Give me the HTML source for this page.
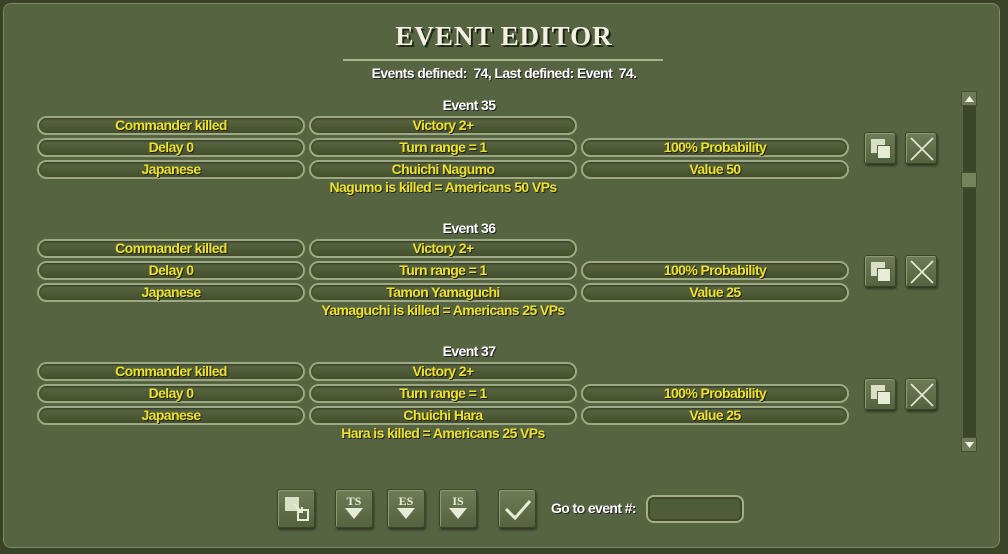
<!DOCTYPE html><html><head><style>
body{margin:0;width:1008px;height:554px;overflow:hidden;background:#3a4228;font-family:"Liberation Sans Narrow","Liberation Sans",sans-serif;}
#p{position:absolute;left:3px;top:3px;width:997px;height:545px;background:#566442;border-radius:8px;border:1px solid #7d8a63;box-sizing:border-box}
.a{position:absolute}
.t{position:absolute;left:0;width:1008px;text-align:center}
.pill{position:absolute;height:19px;width:268px;box-sizing:border-box;border:2px solid #9ea983;border-radius:10px;background:linear-gradient(#5a6743,#44502d);box-shadow:inset 0 1px 2px #2c3420;color:#ece22c;font-weight:bold;font-size:14px;line-height:15px;text-align:center;text-shadow:1px 1px 0 #222;letter-spacing:-0.6px}
.lbl{position:absolute;left:0;width:938px;text-align:center;color:#fff;font-weight:bold;font-size:14px;text-shadow:1px 1px 0 #222;letter-spacing:-0.6px}
.desc{position:absolute;left:0;width:886px;text-align:center;color:#ece22c;font-weight:bold;font-size:14px;text-shadow:1px 1px 0 #222;letter-spacing:-0.6px}
.btn{position:absolute;width:32px;height:32px;box-sizing:border-box;background:linear-gradient(#6f7c57,#55623f);border:1px solid #3c4529;box-shadow:1px 2px 2px #2f371f, inset 1px 1px 0 #8e9a73;border-radius:3px}
.bb{position:absolute;width:38px;height:39px;top:489px;box-sizing:border-box;background:linear-gradient(#6f7c57,#55623f);border:1px solid #3c4529;box-shadow:1px 2px 2px #2f371f, inset 1px 1px 0 #8e9a73;border-radius:3px;color:#e8eed8;font-family:"Liberation Serif",serif;font-weight:bold;font-size:12px;text-align:center}
.c1{position:absolute;left:6px;top:6px;width:14px;height:14px;background:#d8dfc4}
.c2{position:absolute;left:12px;top:12px;width:14px;height:14px;background:#e6ecd6;border:1px solid #55623f;box-sizing:border-box}
</style></head><body>
<div id="p"></div>
<div class="t" style="top:21px;font-family:'Liberation Serif',serif;font-weight:bold;font-size:27px;color:#f2f0e0;text-shadow:2px 2px 0 #1e2414;letter-spacing:1px">EVENT EDITOR</div>
<div class="a" style="left:343px;top:59px;width:320px;height:2px;background:#a9b38e"></div>
<div class="t" style="top:65px;color:#fff;font-weight:bold;font-size:14px;text-shadow:1px 1px 0 #222;letter-spacing:-0.6px">Events defined:&nbsp; 74, Last defined: Event&nbsp; 74.</div>

<div class="lbl" style="top:97px">Event 35</div>
<div class="pill" style="left:37px;top:116px">Commander killed</div>
<div class="pill" style="left:309px;top:116px">Victory 2+</div>
<div class="pill" style="left:37px;top:138px">Delay 0</div>
<div class="pill" style="left:309px;top:138px">Turn range = 1</div>
<div class="pill" style="left:581px;top:138px">100% Probability</div>
<div class="pill" style="left:37px;top:160px">Japanese</div>
<div class="pill" style="left:309px;top:160px">Chuichi Nagumo</div>
<div class="pill" style="left:581px;top:160px">Value 50</div>
<div class="desc" style="top:179px">Nagumo is killed = Americans 50 VPs</div>

<div class="lbl" style="top:220px">Event 36</div>
<div class="pill" style="left:37px;top:239px">Commander killed</div>
<div class="pill" style="left:309px;top:239px">Victory 2+</div>
<div class="pill" style="left:37px;top:261px">Delay 0</div>
<div class="pill" style="left:309px;top:261px">Turn range = 1</div>
<div class="pill" style="left:581px;top:261px">100% Probability</div>
<div class="pill" style="left:37px;top:283px">Japanese</div>
<div class="pill" style="left:309px;top:283px">Tamon Yamaguchi</div>
<div class="pill" style="left:581px;top:283px">Value 25</div>
<div class="desc" style="top:302px">Yamaguchi is killed = Americans 25 VPs</div>

<div class="lbl" style="top:343px">Event 37</div>
<div class="pill" style="left:37px;top:362px">Commander killed</div>
<div class="pill" style="left:309px;top:362px">Victory 2+</div>
<div class="pill" style="left:37px;top:384px">Delay 0</div>
<div class="pill" style="left:309px;top:384px">Turn range = 1</div>
<div class="pill" style="left:581px;top:384px">100% Probability</div>
<div class="pill" style="left:37px;top:406px">Japanese</div>
<div class="pill" style="left:309px;top:406px">Chuichi Hara</div>
<div class="pill" style="left:581px;top:406px">Value 25</div>
<div class="desc" style="top:425px">Hara is killed = Americans 25 VPs</div>

<div class="btn" style="left:864px;top:132px"><div class="c1"></div><div class="c2"></div></div>
<div class="btn" style="left:905px;top:132px"><svg class="a" style="left:0;top:0" width="32" height="32"><path d="M5 5L27 27M27 5L5 27" stroke="#e6ecd6" stroke-width="1.6"/></svg></div>
<div class="btn" style="left:864px;top:255px"><div class="c1"></div><div class="c2"></div></div>
<div class="btn" style="left:905px;top:255px"><svg class="a" style="left:0;top:0" width="32" height="32"><path d="M5 5L27 27M27 5L5 27" stroke="#e6ecd6" stroke-width="1.6"/></svg></div>
<div class="btn" style="left:864px;top:378px"><div class="c1"></div><div class="c2"></div></div>
<div class="btn" style="left:905px;top:378px"><svg class="a" style="left:0;top:0" width="32" height="32"><path d="M5 5L27 27M27 5L5 27" stroke="#e6ecd6" stroke-width="1.6"/></svg></div>

<div class="a" style="left:963px;top:92px;width:13px;height:360px;background:#3c4629"></div>
<div class="a" style="left:961px;top:91px;width:16px;height:15px;background:#6f7c57;border:1px solid #44502f;box-sizing:border-box"><svg class="a" style="left:2px;top:3px" width="11" height="8"><path d="M5.5 1L10 7H1Z" fill="#eef2e0"/></svg></div>
<div class="a" style="left:961px;top:172px;width:16px;height:16px;background:#76835c;border:1px solid #44502f;box-sizing:border-box"></div>
<div class="a" style="left:961px;top:437px;width:16px;height:15px;background:#6f7c57;border:1px solid #44502f;box-sizing:border-box"><svg class="a" style="left:2px;top:3px" width="11" height="8"><path d="M1 1H10L5.5 7Z" fill="#eef2e0"/></svg></div>

<div class="bb" style="left:277px"><div class="a" style="left:7px;top:7px;width:14px;height:14px;background:#d8dfc4"></div><svg class="a" style="left:0;top:0" width="38" height="39"><path d="M20 20h10v10h-10z" fill="none" stroke="#e6ecd6" stroke-width="2"/><path d="M16 14l8 8M24 17v5h-5" stroke="#e6ecd6" stroke-width="2" fill="none"/></svg></div>
<div class="bb" style="left:335px"><div style="margin-top:5px;line-height:12px">TS</div><svg width="20" height="13"><path d="M1 1H19L10 12Z" fill="#e6ecd6"/></svg></div>
<div class="bb" style="left:387px"><div style="margin-top:5px;line-height:12px">ES</div><svg width="20" height="13"><path d="M1 1H19L10 12Z" fill="#e6ecd6"/></svg></div>
<div class="bb" style="left:439px"><div style="margin-top:5px;line-height:12px">IS</div><svg width="20" height="13"><path d="M1 1H19L10 12Z" fill="#e6ecd6"/></svg></div>
<div class="bb" style="left:498px"><svg class="a" style="left:0;top:0" width="38" height="39"><path d="M7 19L16 28L31 11" stroke="#e6ecd6" stroke-width="3" fill="none"/></svg></div>
<div class="a" style="left:551px;top:500px;color:#fff;font-weight:bold;font-size:14px;text-shadow:1px 1px 0 #222;letter-spacing:-0.6px">Go to event #:</div>
<div class="a" style="left:646px;top:495px;width:98px;height:28px;box-sizing:border-box;border:2px solid #a4ae88;border-radius:8px;background:#4f5c39;box-shadow:inset 0 0 0 2px #3f4a2c"></div>
</body></html>
